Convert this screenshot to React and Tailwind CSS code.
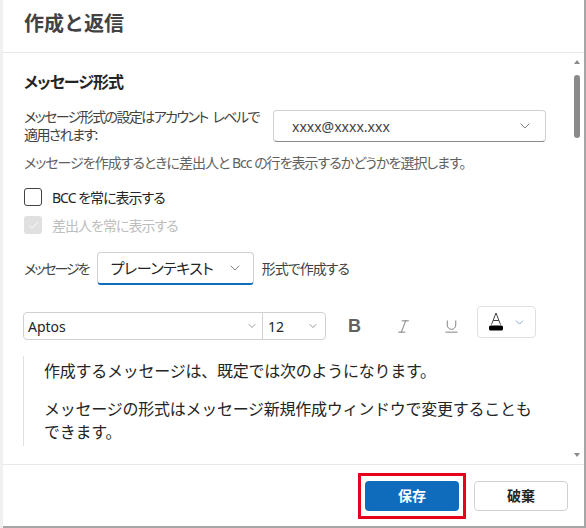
import React from 'react';
import { ChevronDown, Italic, Underline, Check } from 'lucide-react';

const font = '[font-family:"Noto_Sans","Noto_Sans_CJK_JP",sans-serif]';
const palt = '[font-feature-settings:"palt"]';

function Checkbox({ label, checked, disabled }) {
  return (
    <div className="flex h-[24px] items-center gap-[10px]">
      <div
        className={`flex h-[18px] w-[18px] items-center justify-center rounded-[3px] ${
          disabled ? 'bg-[#e0e0e0]' : 'border border-[#424242] bg-white'
        }`}
      >
        {checked && <Check className="h-[13px] w-[13px] text-white" strokeWidth={1.5} />}
      </div>
      <span className={`text-[14px] tracking-[-1px] ${palt} ${disabled ? 'text-[#bdbdbd]' : 'text-[#242424]'}`}>
        {label}
      </span>
    </div>
  );
}

function ColorIcon() {
  return (
    <svg width="18" height="20" viewBox="0 0 18 20">
      <path d="M4.5 12.5 L9 1 L13.5 12.5 M6.2 8.5 H11.8" fill="none" stroke="#424242" strokeWidth="1" />
      <rect x="2" y="13.5" width="14" height="5" rx="1.5" fill="#000" />
    </svg>
  );
}

export default function App() {
  return (
    <div className={`flex h-[528px] w-[586px] overflow-hidden bg-white ${font}`}>
      <div className="w-[3px] shrink-0 bg-[#f0f0f0]" />
      <div className="flex min-w-0 flex-1 flex-col border-r-2 border-b-2 border-[#a6a6a6]">
        {/* Header */}
        <div className="flex h-[53px] shrink-0 items-center border-b border-[#e8e8e8] pb-[4px] pl-[21px]">
          <h1 className="text-[20px] font-semibold text-[#424242]">作成と返信</h1>
        </div>

        {/* Body */}
        <div className="flex min-h-0 flex-1">
          <div className="min-w-0 flex-1 overflow-hidden pt-[18px] pr-[24px] pl-[21px]">
            <h2 className={`text-[16px] leading-[22px] font-bold tracking-[-1px] text-[#242424] ${palt}`}>メッセージ形式</h2>

            <div className="mt-[15px] flex items-center justify-between">
              <p className={`text-[14px] leading-[18px] tracking-[-1.6px] text-[#424242] ${palt}`}>
                メッセージ形式の設定はアカウント<span className="inline-block w-[5px]" />レベルで
                <br />
                適用されます:
              </p>
              <div className="flex h-[32px] w-[273px] items-center justify-between rounded-[4px] border border-[#d1d1d1] border-b-[#8a8a8a] pr-[12px] pl-[18px]">
                <span className="text-[14px] text-[#424242]">xxxx@xxxx.xxx</span>
                <ChevronDown className="h-[16px] w-[16px] text-[#616161]" strokeWidth={1.2} />
              </div>
            </div>

            <p className={`mt-[9px] text-[14px] leading-[20px] tracking-[-1px] text-[#616161] ${palt}`}>
              メッセージを作成するときに差出人と Bcc の行を表示するかどうかを選択します。
            </p>

            <div className="mt-[12px] flex flex-col gap-[4px]">
              <Checkbox label="BCC を常に表示する" />
              <Checkbox label="差出人を常に表示する" checked disabled />
            </div>

            <div className={`mt-[15px] flex items-center gap-[8px] text-[14px] tracking-[-1px] text-[#424242] ${palt}`}>
              <span className="tracking-[-2px]">メッセージを</span>
              <div className="flex h-[33px] w-[157px] items-center justify-between rounded-[4px] border border-[#d1d1d1] border-b-2 border-b-[#0f6cbd] pr-[10px] pl-[13px]">
                <span className="text-[15px] tracking-[-0.5px] text-[#242424]">プレーンテキスト</span>
                <ChevronDown className="h-[16px] w-[16px] text-[#616161]" strokeWidth={1.2} />
              </div>
              <span>形式で作成する</span>
            </div>

            {/* Toolbar */}
            <div className="mt-[21px] flex items-start">
              <div className="mt-[6px] ml-[-1px] flex h-[28px] rounded-[4px] border border-[#d1d1d1]">
                <div className="flex w-[239px] items-center justify-between border-r border-[#d1d1d1] pr-[4px] pl-[4px]">
                  <span className="text-[14px] text-[#242424]">Aptos</span>
                  <ChevronDown className="h-[12px] w-[12px] text-[#616161]" strokeWidth={1.3} />
                </div>
                <div className="flex w-[62px] items-center justify-between pr-[6px] pl-[5px]">
                  <span className="text-[14px] text-[#242424]">12</span>
                  <ChevronDown className="h-[12px] w-[12px] text-[#616161]" strokeWidth={1.3} />
                </div>
              </div>
              <div className="mt-[6px] flex h-[28px] items-center">
                <span className="ml-[22px] w-[14px] text-[18px] font-black text-[#616161] [font-family:'Liberation_Sans',sans-serif]">B</span>
                <Italic className="ml-[33px] h-[17px] w-[17px] text-[#616161]" strokeWidth={1.1} />
                <Underline className="ml-[31px] h-[17px] w-[17px] text-[#616161]" strokeWidth={1.1} />
              </div>
              <div className="ml-[17px] flex h-[32px] w-[59px] items-center justify-center gap-[8px] rounded-[4px] border border-[#e0e0e0]">
                <ColorIcon />
                <ChevronDown className="h-[13px] w-[13px] text-[#5b8fc9]" strokeWidth={1.4} />
              </div>
            </div>

            {/* Editor preview */}
            <div className="mt-[16px] ml-[-1px] h-[90px] w-[516px] overflow-hidden border-l border-[#e0e0e0] pt-[3px] pl-[20px] text-[16px] tracking-[-0.25px] text-[#242424]">
              <p className="leading-[24px]">作成するメッセージは、既定では次のようになります。</p>
              <p className="mt-[15px] leading-[23px]">
                メッセージの形式はメッセージ新規作成ウィンドウで変更することもできます。
              </p>
            </div>
          </div>

          {/* Scrollbar */}
          <div className="relative w-[14px] shrink-0">
            <div className="absolute top-[7px] left-[4px] h-0 w-0 border-x-[3px] border-b-[4px] border-x-transparent border-b-[#8a8a8a]" />
            <div className="absolute top-[22px] left-[4px] h-[63px] w-[6px] rounded-full bg-[#8a8a8a]" />
            <div className="absolute bottom-[7px] left-[4px] h-0 w-0 border-x-[3px] border-t-[4px] border-x-transparent border-t-[#8a8a8a]" />
          </div>
        </div>

        {/* Footer */}
        <div className="flex h-[62px] shrink-0 items-center justify-end gap-[8px] border-t border-[#e8e8e8] pr-[16px]">
          <div className="border-[3px] border-[#e8001c] px-[4px] py-[5px]">
            <button className="flex h-[30px] w-[94px] items-center justify-center rounded-[4px] bg-[#0f6cbd] text-[14px] font-bold text-white">
              保存
            </button>
          </div>
          <button className="flex h-[30px] w-[94px] items-center justify-center rounded-[4px] border border-[#d1d1d1] bg-white text-[14px] font-bold text-[#242424]">
            破棄
          </button>
        </div>
      </div>
    </div>
  );
}
